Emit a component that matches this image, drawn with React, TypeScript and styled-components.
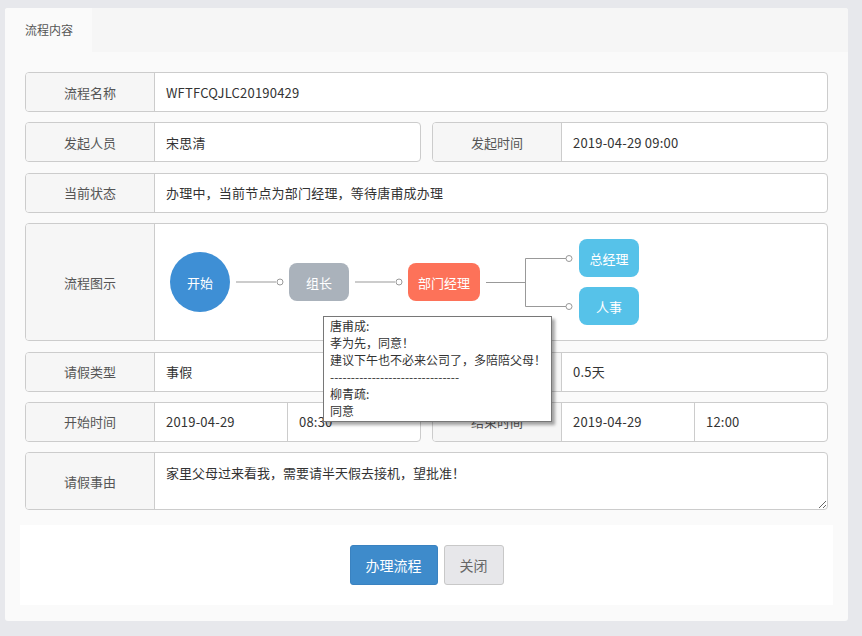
import styled, { createGlobalStyle } from "styled-components";

const GlobalStyle = createGlobalStyle`
  html, body {
    margin: 0;
    padding: 0;
    background: #e7e8ec;
    font-family: "Noto Sans CJK SC", "Noto Sans", sans-serif;
  }
  * {
    box-sizing: border-box;
  }
`;

const Page = styled.div`
  padding: 8px 14px 15px 5px;
`;

const Panel = styled.div`
  background: #fafafa;
  border-radius: 3px;
`;

const TabBar = styled.div`
  display: flex;
  height: 44px;
  background: #f6f6f6;
  border-radius: 3px 3px 0 0;
`;

const Tab = styled.div`
  width: 87px;
  padding-left: 20px;
  line-height: 44px;
  font-size: 12px;
  color: #555;
  background: #fafafa;
  border-radius: 3px 0 0 0;
`;

const Body = styled.div`
  padding: 20px 15px 16px;
`;

const Form = styled.div`
  display: flex;
  flex-direction: column;
  gap: 10.4px;
  margin: 0 5px 15px;
`;

const Row = styled.div<{ $split?: boolean }>`
  display: grid;
  grid-template-columns: ${(p) => (p.$split ? "1fr 1fr" : "1fr")};
  gap: 11px;
`;

const Group = styled.div<{ $h?: number }>`
  position: relative;
  display: flex;
  height: ${(p) => p.$h ?? 40}px;
  background: #fff;
  border: 1px solid #ccc;
  border-radius: 4px;
`;

const Label = styled.div`
  flex: none;
  width: 129px;
  display: flex;
  align-items: center;
  justify-content: center;
  background: #f6f6f6;
  border-right: 1px solid #ccc;
  border-radius: 3px 0 0 3px;
  font-size: 13px;
  color: #555;
`;

const Value = styled.div<{ $divider?: boolean }>`
  flex: 1;
  display: flex;
  align-items: center;
  padding: 0 11px;
  font-size: 13px;
  letter-spacing: 0.2px;
  color: #333;
  border-left: ${(p) => (p.$divider ? "1px solid #ccc" : "none")};
`;

const Reason = styled.textarea`
  flex: 1;
  border: none;
  outline: none;
  resize: vertical;
  padding: 10px 11px;
  font-family: inherit;
  font-size: 13px;
  color: #333;
  background: transparent;
  border-radius: 0 3px 3px 0;
`;

const Chart = styled.div`
  position: relative;
  flex: 1;
  display: flex;
  align-items: center;
  padding-left: 15px;
`;

const Node = styled.div<{ $color: string; $w: number; $h: number; $round?: boolean }>`
  flex: none;
  width: ${(p) => p.$w}px;
  height: ${(p) => p.$h}px;
  display: flex;
  align-items: center;
  justify-content: center;
  background: ${(p) => p.$color};
  border-radius: ${(p) => (p.$round ? "50%" : "8px")};
  color: #fff;
  font-size: 13px;
`;

const Branches = styled.div`
  display: flex;
  flex-direction: column;
  gap: 10px;
`;

const Tooltip = styled.div`
  position: absolute;
  left: 168px;
  top: 92px;
  z-index: 5;
  width: 229px;
  padding: 0 6px 2px;
  background: #fff;
  border: 1px solid #777;
  box-shadow: 3px 3px 3px rgba(0, 0, 0, 0.35);
  font-size: 12px;
  line-height: 17px;
  color: #333;
  white-space: nowrap;
`;

const ButtonBar = styled.div`
  display: flex;
  justify-content: center;
  align-items: center;
  gap: 6px;
  height: 80px;
  background: #fff;
`;

const Button = styled.button<{ $primary?: boolean }>`
  height: 40px;
  padding: 0 15px;
  border-radius: 3px;
  font-family: inherit;
  font-size: 14px;
  cursor: pointer;
  color: ${(p) => (p.$primary ? "#fff" : "#666")};
  background: ${(p) => (p.$primary ? "#3e8bcb" : "#e7e7ea")};
  border: 1px solid ${(p) => (p.$primary ? "#3a82c0" : "#c8c8c8")};
`;

function Connector() {
  return (
    <svg width="59" height="8" viewBox="0 0 59 8" style={{ flex: "none" }}>
      <line x1="6" y1="4" x2="46" y2="4" stroke="#999" strokeWidth="1" />
      <circle cx="50" cy="4" r="3" fill="#fff" stroke="#999" strokeWidth="1" />
    </svg>
  );
}

function BranchConnector() {
  return (
    <svg width="99" height="86" viewBox="0 0 99 86" style={{ flex: "none" }}>
      <g stroke="#999" strokeWidth="1" fill="none">
        <line x1="6" y1="43.5" x2="45.5" y2="43.5" />
        <line x1="45.5" y1="19.5" x2="45.5" y2="67.5" />
        <line x1="45.5" y1="19.5" x2="86" y2="19.5" />
        <line x1="45.5" y1="67.5" x2="86" y2="67.5" />
      </g>
      <circle cx="89" cy="19.5" r="3" fill="#fff" stroke="#999" />
      <circle cx="89" cy="67.5" r="3" fill="#fff" stroke="#999" />
    </svg>
  );
}

export default function App() {
  return (
    <>
      <GlobalStyle />
      <Page>
        <Panel>
          <TabBar>
            <Tab>流程内容</Tab>
          </TabBar>
          <Body>
            <Form>
              <Row>
                <Group>
                  <Label>流程名称</Label>
                  <Value>WFTFCQJLC20190429</Value>
                </Group>
              </Row>
              <Row $split>
                <Group>
                  <Label>发起人员</Label>
                  <Value>宋思清</Value>
                </Group>
                <Group>
                  <Label>发起时间</Label>
                  <Value>2019-04-29 09:00</Value>
                </Group>
              </Row>
              <Row>
                <Group>
                  <Label>当前状态</Label>
                  <Value>办理中，当前节点为部门经理，等待唐甫成办理</Value>
                </Group>
              </Row>
              <Row>
                <Group $h={118}>
                  <Label>流程图示</Label>
                  <Chart>
                    <Node $color="#3e8fd5" $w={60} $h={60} $round>
                      开始
                    </Node>
                    <Connector />
                    <Node $color="#aab2bb" $w={60} $h={38}>
                      组长
                    </Node>
                    <Connector />
                    <Node $color="#fd7259" $w={72} $h={38}>
                      部门经理
                    </Node>
                    <BranchConnector />
                    <Branches>
                      <Node $color="#56c2e9" $w={60} $h={38}>
                        总经理
                      </Node>
                      <Node $color="#56c2e9" $w={60} $h={38}>
                        人事
                      </Node>
                    </Branches>
                    <Tooltip>
                      <div>唐甫成:</div>
                      <div>孝为先，同意！</div>
                      <div>建议下午也不必来公司了，多陪陪父母！</div>
                      <div>-------------------------------</div>
                      <div>柳青疏:</div>
                      <div>同意</div>
                    </Tooltip>
                  </Chart>
                </Group>
              </Row>
              <Row $split>
                <Group>
                  <Label>请假类型</Label>
                  <Value>事假</Value>
                </Group>
                <Group>
                  <Label>请假天数</Label>
                  <Value>0.5天</Value>
                </Group>
              </Row>
              <Row $split>
                <Group>
                  <Label>开始时间</Label>
                  <Value>2019-04-29</Value>
                  <Value $divider>08:30</Value>
                </Group>
                <Group>
                  <Label>结束时间</Label>
                  <Value>2019-04-29</Value>
                  <Value $divider>12:00</Value>
                </Group>
              </Row>
              <Row>
                <Group $h={58}>
                  <Label>请假事由</Label>
                  <Reason
                    readOnly
                    defaultValue="家里父母过来看我，需要请半天假去接机，望批准！"
                  />
                </Group>
              </Row>
            </Form>
            <ButtonBar>
              <Button $primary>办理流程</Button>
              <Button>关闭</Button>
            </ButtonBar>
          </Body>
        </Panel>
      </Page>
    </>
  );
}
